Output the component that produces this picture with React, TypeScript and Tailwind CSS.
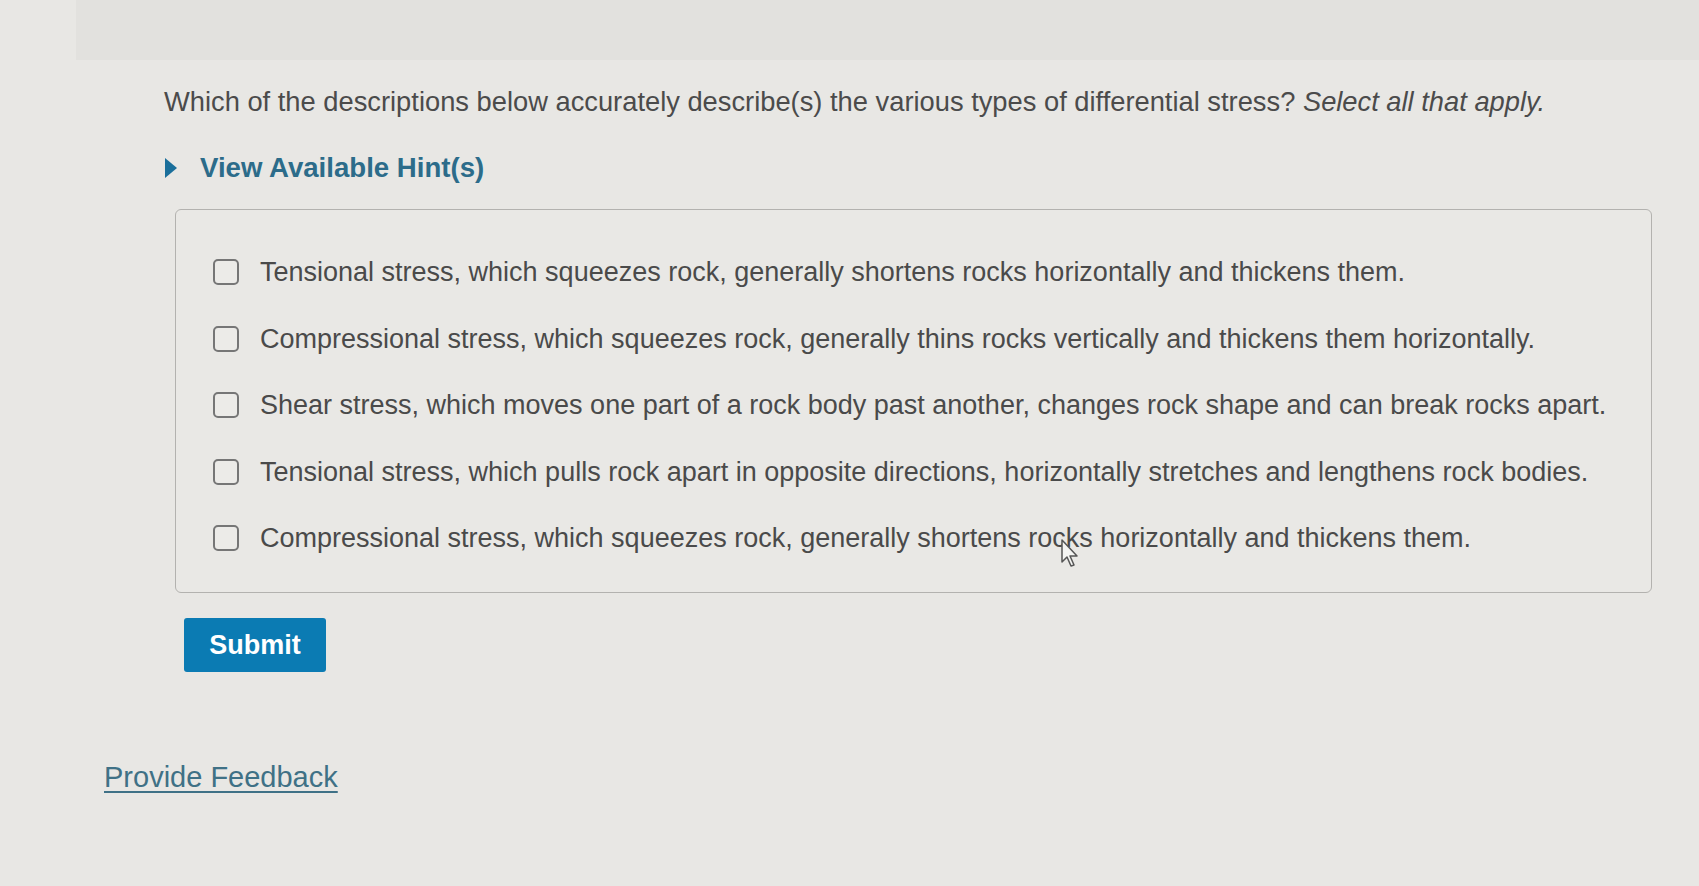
import React from "react";

const options = [
  "Tensional stress, which squeezes rock, generally shortens rocks horizontally and thickens them.",
  "Compressional stress, which squeezes rock, generally thins rocks vertically and thickens them horizontally.",
  "Shear stress, which moves one part of a rock body past another, changes rock shape and can break rocks apart.",
  "Tensional stress, which pulls rock apart in opposite directions, horizontally stretches and lengthens rock bodies.",
  "Compressional stress, which squeezes rock, generally shortens rocks horizontally and thickens them.",
];

export default function App() {
  return (
    <div
      className="relative w-[1699px] h-[886px] overflow-hidden bg-[#e8e7e4] flex flex-col"
      style={{ fontFamily: '"Liberation Sans", Arial, sans-serif' }}
    >
      <div className="h-[60px] ml-[76px] bg-[#e2e1de] shrink-0" />
      <div className="pl-[164px] pt-[26px]">
        <p className="text-[27.3px] leading-[32px] text-[#4b4b4b]">
          Which of the descriptions below accurately describe(s) the various types of differential stress?{" "}
          <em>Select all that apply.</em>
        </p>
        <div className="mt-[34px] flex items-center gap-[22px] ml-[0px]">
          <svg width="14" height="22" viewBox="0 0 14 22">
            <path d="M1 1 L13 11 L1 21 Z" fill="#1a6f9b" />
          </svg>
          <span className="text-[27.6px] leading-[32px] font-bold text-[#2c6c8a]">View Available Hint(s)</span>
        </div>
      </div>
      <div className="ml-[175px] mt-[25px] w-[1477px] h-[384px] border border-[#b3b2af] rounded-[6px] bg-[#e9e8e5] pt-[46px] pl-[37px] flex flex-col gap-[34.5px]">
        {options.map((o, i) => (
          <div key={i} className="flex items-center gap-[21px] h-[32px]">
            <div className="w-[26px] h-[26px] rounded-[5px] border-2 border-[#767676] bg-[#ecebe8] shrink-0" />
            <span className="text-[27px] leading-[32px] text-[#4a4a4a]">{o}</span>
          </div>
        ))}
      </div>
      <div className="ml-[184px] mt-[25px]">
        <button className="w-[142px] h-[54px] rounded-[3px] bg-[#0b7bb3] text-white text-[27px] font-bold">
          Submit
        </button>
      </div>
      <div className="ml-[104px] mt-[88px]">
        <a className="text-[29px] leading-[34px] text-[#3f7186] underline underline-offset-[4px]">
          Provide Feedback
        </a>
      </div>
      <svg
        className="absolute left-[1060px] top-[538px]"
        width="22"
        height="30"
        viewBox="0 0 22 30"
      >
        <path
          d="M2 2 L2 24 L7 19 L11 28 L14 27 L10 18 L17 18 Z"
          fill="#f4f4f2"
          stroke="#555"
          strokeWidth="1.5"
          strokeLinejoin="round"
        />
      </svg>
    </div>
  );
}
